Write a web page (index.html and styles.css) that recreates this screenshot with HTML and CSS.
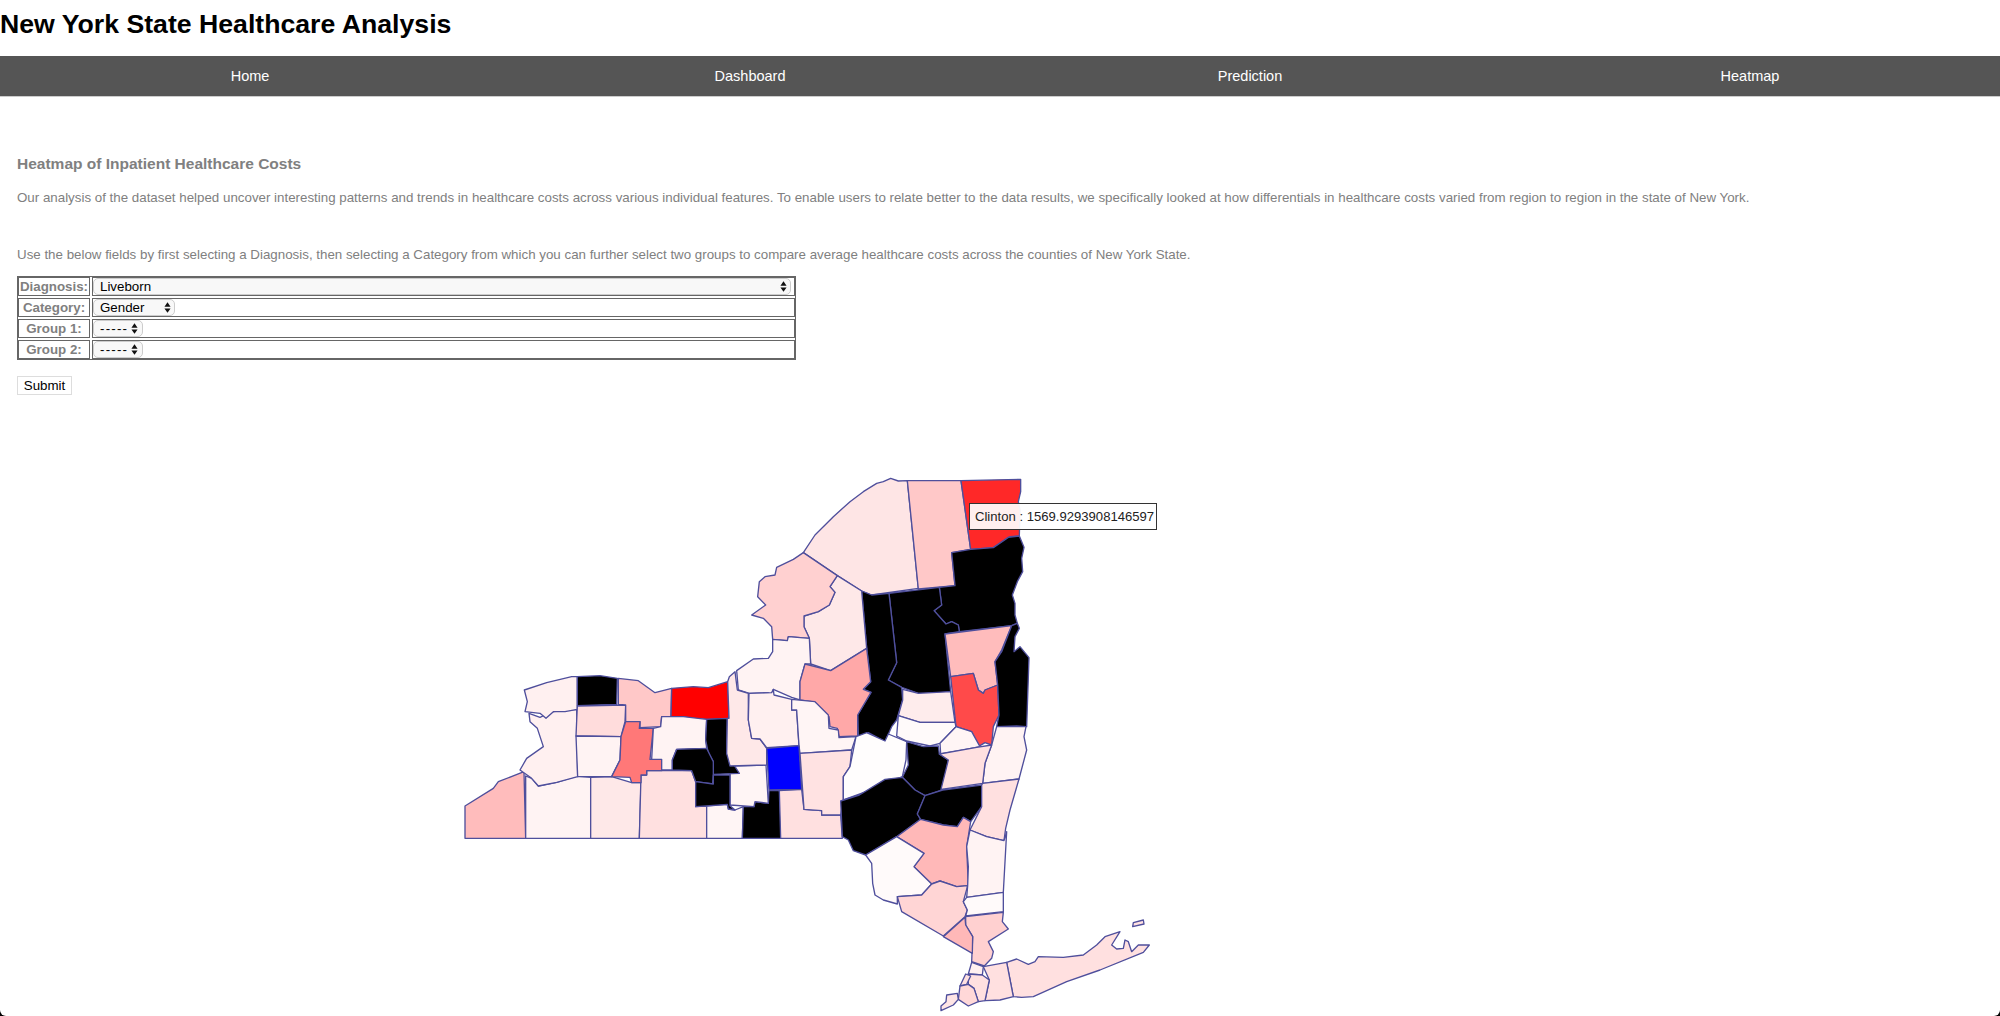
FILE: index.html
```html
<!DOCTYPE html>
<html lang="en">
<head>
<meta charset="utf-8">
<title>New York State Healthcare Analysis</title>
<link rel="stylesheet" href="styles.css">
</head>
<body>
<h1 class="title">New York State Healthcare Analysis</h1>
<nav class="nav">
  <a class="nav-item" href="#">Home</a>
  <a class="nav-item" href="#">Dashboard</a>
  <a class="nav-item" href="#">Prediction</a>
  <a class="nav-item" href="#">Heatmap</a>
</nav>
<main class="content">
  <h2 class="heading">Heatmap of Inpatient Healthcare Costs</h2>
  <p class="text">Our analysis of the dataset helped uncover interesting patterns and trends in healthcare costs across various individual features. To enable users to relate better to the data results, we specifically looked at how differentials in healthcare costs varied from region to region in the state of New York.</p>
  <p class="text text-second">Use the below fields by first selecting a Diagnosis, then selecting a Category from which you can further select two groups to compare average healthcare costs across the counties of New York State.</p>
  <table class="form-table">
    <tr>
      <th class="cell label">Diagnosis:</th>
      <td class="cell"><span class="pick pick-full"><select class="sel"><option>Liveborn</option></select><svg class="arrows" viewBox="0 0 8 12"><path d="M4 0 7.5 5H.5zM4 12 .5 7h7z"/></svg></span></td>
    </tr>
    <tr>
      <th class="cell label">Category:</th>
      <td class="cell"><span class="pick pick-gender"><select class="sel"><option>Gender</option></select><svg class="arrows" viewBox="0 0 8 12"><path d="M4 0 7.5 5H.5zM4 12 .5 7h7z"/></svg></span></td>
    </tr>
    <tr>
      <th class="cell label">Group 1:</th>
      <td class="cell"><span class="pick pick-group"><select class="sel sel-dash"><option>-----</option></select><svg class="arrows" viewBox="0 0 8 12"><path d="M4 0 7.5 5H.5zM4 12 .5 7h7z"/></svg></span></td>
    </tr>
    <tr>
      <th class="cell label">Group 2:</th>
      <td class="cell"><span class="pick pick-group"><select class="sel sel-dash"><option>-----</option></select><svg class="arrows" viewBox="0 0 8 12"><path d="M4 0 7.5 5H.5zM4 12 .5 7h7z"/></svg></span></td>
    </tr>
  </table>
  <button class="submit" type="button">Submit</button>
</main>
<section class="map-wrap">
<svg class="map" viewBox="450 470 720 546" width="720" height="546" role="img" aria-label="Heatmap of New York State counties">
  <g class="zoomed north">
    <polygon class="c-e5" points="310,278 345,225 400,170 450,125 490,95 530,70 550,65 572,55 595,63 622,62 655,385 515,405 485,393 412,347"/>
    <polygon class="c-c8" points="622,62 783,62 812,268 755,278 765,377 655,387"/>
    <polygon class="c-28" points="783,62 962,58 962,95 955,125 960,150 958,228 930,230 880,263 812,268"/>
    <polygon class="c-k" points="755,278 812,268 880,263 925,232 958,228 972,262 965,295 968,335 952,365 937,405 945,430 945,465 952,490 935,497 778,515 775,495 755,485 738,492 702,452 725,435 718,382 765,377"/>
    <polygon class="c-k" points="567,400 718,382 725,435 702,452 738,492 755,485 775,495 778,515 735,522 752,695 700,700 655,700 605,682 565,660 590,608"/>
    <polygon class="c-k" points="485,393 515,405 567,400 590,608 565,660 605,682 608,720 590,780 575,800 555,845 505,818 475,832 473,765 513,697 490,688 512,665 500,565"/>
    <polygon class="c-e8" points="412,347 485,393 500,565 392,632 332,612 328,535 312,500 312,468 355,455 388,435 405,397 390,380"/>
    <polygon class="c-d0" points="310,278 412,347 390,380 405,397 388,435 355,455 312,468 312,500 328,535 265,530 262,542 218,538 215,500 190,475 155,465 197,435 173,410 178,365 195,350 225,345 230,322 280,298"/>
    <polygon class="c-f3" points="218,538 262,542 265,530 328,535 332,612 315,612 300,665 300,720 275,712 220,688 218,708 205,698 148,700 115,690 110,632 160,597 205,595 218,575"/>
    <polygon class="c-a8" points="315,612 392,632 500,565 512,665 490,688 513,697 473,765 473,828 417,830 412,805 390,800 387,770 335,725 300,720 300,665"/>
    <polygon class="c-bc" points="735,522 935,497 905,570 885,605 893,675 855,690 850,700 835,690 820,640 752,650"/>
    <polygon class="c-4a" points="752,650 820,640 835,690 850,700 855,690 893,675 897,765 880,800 875,855 855,848 835,860 815,815 768,800"/>
    <polygon class="c-k" points="952,490 958,505 945,530 942,575 960,560 987,593 980,800 950,798 890,800 897,765 893,675 885,605 905,575 935,497"/>
    <polygon class="c-ec" points="608,688 655,700 752,695 765,787 660,787 595,767 608,720"/>
    <polygon class="c-fa" points="595,767 660,787 765,787 768,800 720,850 690,858 620,843 590,828"/>
    <polygon class="c-f5" points="768,800 815,815 840,860 790,870 722,882 720,850"/>
  </g>
  <g class="zoomed west">
    <polygon class="c-bc" points="45,438 130,385 145,365 222,335 227,535 45,535"/>
    <polygon class="c-f3" points="227,348 245,355 265,378 320,367 380,348 422,352 422,535 227,535"/>
    <polygon class="c-e8" points="422,352 485,350 545,368 573,368 568,535 422,535"/>
    <polygon class="c-e0" points="573,345 590,345 590,332 725,332 737,365 737,440 770,438 770,535 568,535"/>
    <polygon class="c-f5" points="770,438 832,433 835,447 855,450 880,440 877,535 770,535"/>
    <polygon class="c-k" points="880,440 912,440 915,425 955,430 957,392 988,392 1000,450 992,535 877,535"/>
    <polygon class="c-e0" points="988,392 1055,388 1062,448 1115,452 1115,465 1172,465 1177,535 992,535"/>
    <polygon class="c-f0" points="237,160 270,172 285,165 310,155 380,148 383,350 320,367 265,378 245,355 210,330 230,295 280,260 262,205 240,185"/>
    <polygon class="c-f0" points="223,90 290,68 365,50 382,50 382,148 345,155 310,155 288,175 270,160 225,155 232,125"/>
    <polygon class="c-k" points="382,50 450,47 502,55 500,133 382,137"/>
    <polygon class="c-dc" points="382,138 527,135 525,185 513,230 378,228"/>
    <polygon class="c-f3" points="378,228 513,230 510,300 485,350 383,350"/>
    <polygon class="c-c8" points="505,55 565,62 615,98 665,85 663,170 635,170 632,200 570,203 570,185 527,185 527,135 505,133"/>
    <polygon class="c-78" points="527,185 570,185 568,205 610,205 600,298 635,298 635,332 590,332 590,345 573,345 573,368 545,368 540,352 485,350 510,300 513,230"/>
    <polygon class="c-00" points="665,85 730,80 775,83 833,65 837,175 770,178 725,175 700,170 663,170"/>
    <polygon class="c-f3" points="635,170 700,170 770,178 767,240 770,265 680,268 667,300 667,330 635,330 635,298 605,298 610,205 632,200"/>
    <polygon class="c-f5" points="840,318 948,315 955,430 915,425 912,440 840,435"/>
    <polygon class="c-k" points="770,178 832,175 830,280 868,340 790,343 790,305 775,280 767,240"/>
    <polygon class="c-k" points="680,268 770,265 790,305 790,343 788,372 737,365 725,332 667,330 667,300"/>
    <polygon class="c-k" points="737,365 790,372 790,345 840,345 840,437 855,450 835,447 832,433 737,440"/>
    <polygon class="c-e8" points="838,50 855,35 862,90 895,100 895,180 905,235 930,237 950,265 950,315 840,318 830,280 832,175 837,175 833,65"/>
    <polygon class="c-f0" points="897,100 965,98 970,88 972,105 1025,118 1025,150 1040,150 1047,257 950,263 930,237 905,235 895,180"/>
    <polygon class="c-f5" points="1025,118 1095,125 1135,165 1137,205 1165,210 1167,233 1218,230 1205,270 1050,280 1047,257 1040,150 1025,150"/>
    <polygon class="c-blue" points="950,265 1047,257 1055,388 957,390"/>
    <polygon class="c-e2" points="1050,280 1205,270 1200,320 1180,350 1180,420 1172,465 1115,465 1115,452 1062,448"/>
    <polygon class="c-fd" points="1218,230 1250,218 1305,243 1315,222 1370,245 1368,300 1357,350 1290,380 1180,420 1180,350 1200,320"/>
  </g>
  <g class="zoomed south">
    <polygon class="c-k" points="320,5 370,20 415,18 418,42 445,60 428,150 375,167 345,150 307,112 325,75"/>
    <polygon class="c-k" points="122,183 178,165 255,118 307,112 345,150 375,167 352,222 362,238 290,290 197,345 160,332 145,300 127,290"/>
    <polygon class="c-k" points="375,167 428,150 545,135 545,200 512,245 490,232 472,260 430,255 362,238 352,222"/>
    <polygon class="c-f3" points="590,-40 678,-40 672,-10 680,30 657,117 548,130 555,70 575,15"/>
    <polygon class="c-e0" points="418,42 530,22 575,15 555,70 548,130 423,148 445,60"/>
    <polygon class="c-e0" points="548,130 657,117 630,210 617,265 612,302 560,290 510,270 545,200 545,135"/>
    <polygon class="c-b8" points="362,238 430,255 472,260 490,232 512,245 500,320 505,437 470,440 420,423 395,432 342,380 372,340 290,290"/>
    <polygon class="c-fa" points="197,345 290,290 372,340 342,380 395,432 365,465 292,470 292,492 250,480 225,465 218,430 215,370"/>
    <polygon class="c-d5" points="292,470 365,465 395,432 420,423 470,440 503,437 490,485 502,510 495,530 430,588 305,515"/>
    <polygon class="c-f3" points="510,270 560,290 612,302 620,275 610,457 500,472 503,437 505,380 500,320"/>
    <polygon class="c-fa" points="500,472 610,457 610,515 497,528 502,510 490,485"/>
    <polygon class="c-d0" points="497,530 610,517 607,545 625,567 565,605 580,635 575,655 553,678 515,665 518,590 497,555"/>
    <polygon class="c-b8" points="495,532 497,555 518,590 517,640 430,590"/>
  </g>
  <g class="zoomed island">
    <polygon class="c-e0" points="320,187 350,177 385,193 405,185 415,170 490,172 550,165 590,135 615,110 660,95 635,135 650,147 670,145 675,120 685,125 695,155 715,135 748,135 730,157 600,210 500,245 400,290 365,292 340,290"/>
    <polygon class="c-e0" points="250,200 320,187 340,290 300,300 255,302 268,240"/>
    <polygon class="c-f0" points="215,187 250,200 247,225 205,222"/>
    <polygon class="c-e0" points="205,222 247,225 268,240 255,302 235,305 222,265 205,253"/>
    <polygon class="c-e0" points="197,222 212,228 200,253 180,258"/>
    <polygon class="c-d8" points="180,258 205,253 222,265 235,305 205,318 175,298"/>
    <polygon class="c-e5" points="140,285 172,280 175,298 160,315 123,332 123,318 138,305"/>
    <polygon class="c-e0" points="700,68 730,60 732,72 698,80"/>
  </g>
</svg>
<div class="tooltip">Clinton : 1569.9293908146597</div>
</section>
</body>
</html>
```
FILE: styles.css
```css
html { margin: 0; padding: 0; background: #000; }
body { margin: 0; padding: 0; background: #fff; font-family: "Liberation Sans", Arial, sans-serif; width: 2000px; height: 1016px; overflow: hidden; border-radius: 0 0 6px 6px; }
.title { margin: 0; padding-top: 9px; height: 56px; box-sizing: border-box; font-size: 26.67px; line-height: 30px; font-weight: bold; color: #000; }
.nav { display: grid; grid-template-columns: repeat(4, 1fr); height: 40px; background: #555; border-bottom: 1px solid #ccc; }
.nav-item { color: #fff; text-decoration: none; text-align: center; font-size: 14.5px; line-height: 40px; }
.content { padding: 0 17px; }
.heading { margin: 58px 0 0; font-size: 15.5px; line-height: 18px; color: #808080; font-weight: bold; }
.text { margin: 16px 0 0; font-size: 13.33px; line-height: 18px; color: #808080; }
.text-second { margin-top: 39px; }
.form-table { margin: 11px 0 0 -1px; width: 781px; border: 0; border-spacing: 2px; border-collapse: separate; outline: 1px solid #666; outline-offset: -2px; }
.cell { border: 1px solid #666; padding: 0; height: 17px; font-size: 13.33px; line-height: 16px; background: #fff; vertical-align: top; }
.label { color: #808080; font-weight: bold; width: 70px; text-align: center; white-space: nowrap; vertical-align: middle; }
.pick { display: inline-block; position: relative; vertical-align: top; height: 17px; }
.pick-full { display: block; margin-right: 3px; }
.pick-gender { width: 82px; }
.pick-group { width: 50px; }
.sel { appearance: none; -webkit-appearance: none; display: block; width: 100%; height: 17px; border: 1px solid #ccc; border-radius: 5px; background: #f8f8f8; padding: 0 0 0 6px; font: 13.33px/15px "Liberation Sans", Arial, sans-serif; color: #000; }
.sel-dash { letter-spacing: 1.2px; }
.arrows { position: absolute; right: 4px; top: 3px; width: 7px; height: 11px; fill: #111; }
.pick-group .arrows { right: 5px; }
.submit { display: block; margin-top: 15px; width: 55px; height: 19px; padding: 0; border: 1px solid #ddd; background: #fff; font: 13.33px "Liberation Sans", Arial, sans-serif; color: #000; }
.map-wrap { position: relative; margin-top: 75px; height: 546px; }
.map { display: block; margin-left: 450px; filter: blur(0.35px); }
.tooltip { position: absolute; left: 969px; top: 33px; width: 188px; height: 27px; box-sizing: border-box; border: 1px solid #333; background: rgba(255, 255, 255, 0.93); font-size: 13.1px; line-height: 25px; color: #222; padding-left: 5px; white-space: nowrap; }
.zoomed polygon { stroke: #4f4f9c; stroke-width: 4; stroke-linejoin: round; }
.north { transform: translate(700px, 460px) scale(0.33333); }
.west { transform: translate(450px, 660px) scale(0.33333); }
.south { transform: translate(800px, 740px) scale(0.33333); }
.island { transform: translate(900px, 900px) scale(0.33333); }
.c-k { fill: #000; }
.c-blue { fill: #00f; }
.c-00 { fill: #f00; }
.c-28 { fill: #ff2828; }
.c-4a { fill: #ff4a4a; }
.c-78 { fill: #ff7878; }
.c-a8 { fill: #ffa8a8; }
.c-b8 { fill: #ffb8b8; }
.c-bc { fill: #ffbcbc; }
.c-c8 { fill: #ffc8c8; }
.c-d0 { fill: #ffd0d0; }
.c-d5 { fill: #ffd5d5; }
.c-d8 { fill: #ffd8d8; }
.c-dc { fill: #ffdcdc; }
.c-e0 { fill: #ffe0e0; }
.c-e2 { fill: #ffe2e2; }
.c-e5 { fill: #fee5e5; }
.c-e8 { fill: #fee8e8; }
.c-ec { fill: #feecec; }
.c-f0 { fill: #fff0f0; }
.c-f3 { fill: #fff3f3; }
.c-f5 { fill: #fff5f5; }
.c-fa { fill: #fffafa; }
.c-fd { fill: #fffdfd; }
```
